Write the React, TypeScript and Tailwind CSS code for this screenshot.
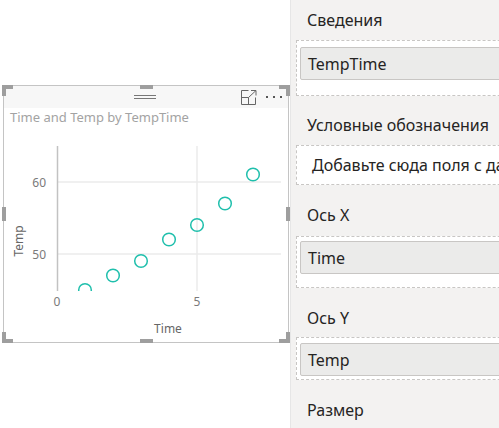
const font = { fontFamily: '"Noto Sans", "Open Sans", sans-serif' };

const points: [number, number][] = [
  [85, 290],
  [113, 275.5],
  [141, 261],
  [169, 239.5],
  [197, 225],
  [225, 203.5],
  [253, 174.5],
];

function ScatterChart() {
  return (
    <svg width={284} height={214} viewBox="4 128 284 214" className="block">
      <defs>
        <clipPath id="plot">
          <rect x={57} y={140} width={230} height={151} />
        </clipPath>
      </defs>
      <line x1={57} y1={182} x2={281} y2={182} stroke="#ebebeb" strokeWidth={1.5} />
      <line x1={57} y1={254} x2={281} y2={254} stroke="#ebebeb" strokeWidth={1.5} />
      <line x1={197} y1={146} x2={197} y2={291} stroke="#ebebeb" strokeWidth={1.5} />
      <line x1={57.5} y1={146} x2={57.5} y2={291} stroke="#c2c2c2" strokeWidth={1.5} />
      <g clipPath="url(#plot)">
        {points.map(([cx, cy]) => (
          <circle key={cx} cx={cx} cy={cy} r={6.3} fill="none" stroke="#1fbfac" strokeWidth={1.5} />
        ))}
      </g>
      <g fontSize={12} fill="#7a7a7a" style={font}>
        <text x={46} y={182} textAnchor="end" dominantBaseline="central">60</text>
        <text x={46} y={254} textAnchor="end" dominantBaseline="central">50</text>
        <text x={57} y={301} textAnchor="middle" dominantBaseline="central">0</text>
        <text x={197} y={301} textAnchor="middle" dominantBaseline="central">5</text>
        <text x={168} y={328} textAnchor="middle" dominantBaseline="central" fill="#666">Time</text>
        <text
          x={18}
          y={241}
          textAnchor="middle"
          dominantBaseline="central"
          fill="#666"
          transform="rotate(-90 18 241)"
        >
          Temp
        </text>
      </g>
    </svg>
  );
}

function Handle({ className }: { className: string }) {
  return <div className={`absolute border-[#9e9e9e] ${className}`} />;
}

function Visual() {
  return (
    <div className="relative ml-[3px] mt-[85px] w-[286px] h-[258px] border border-[#c4c4c4] bg-white">
      {/* selection handles drawn over the frame */}
      <Handle className="-left-[2px] -top-[1px] w-[11px] h-[11px] border-l-4 border-t-4" />
      <Handle className="-right-[2px] -top-[1px] w-[11px] h-[11px] border-r-4 border-t-4" />
      <Handle className="-left-[2px] -bottom-[1px] w-[11px] h-[11px] border-l-4 border-b-4" />
      <Handle className="-right-[2px] -bottom-[1px] w-[11px] h-[11px] border-r-4 border-b-4" />
      <Handle className="left-[136px] -top-[1px] w-[13px] border-t-4" />
      <Handle className="left-[136px] -bottom-[1px] w-[13px] border-b-4" />
      <Handle className="-left-[2px] top-[121px] h-[14px] border-l-4" />
      <Handle className="-right-[2px] top-[121px] h-[14px] border-r-4" />

      <div className="h-[22px] bg-[#f7f7f7] grid grid-cols-[1fr_20px_1fr] items-center">
        <div />
        <div className="flex flex-col gap-[2px] -ml-[2px]">
          <div className="h-px bg-[#777]" />
          <div className="h-px bg-[#777]" />
        </div>
        <div className="flex items-center justify-end gap-[9px] pr-[6px]">
          <svg width={16} height={15} viewBox="0 0 16 15" className="block">
            <path d="M7.5 0.5H0.5V14.5H14.5V7.5" fill="none" stroke="#666" />
            <path d="M0.5 7.5H7.5V14.5" fill="none" stroke="#666" />
            <path d="M7.5 7.5L15 0.5M10 0.5H15V5.5" fill="none" stroke="#666" />
          </svg>
          <div className="flex gap-[5px]">
            <div className="w-[2px] h-[2px] bg-[#555]" />
            <div className="w-[2px] h-[2px] bg-[#555]" />
            <div className="w-[2px] h-[2px] bg-[#555]" />
          </div>
        </div>
      </div>
      <div className="h-[20px] pl-[6px] flex items-center text-[13px] text-[#a3a3a3]" style={font}>
        Time and Temp by TempTime
      </div>
      <ScatterChart />
    </div>
  );
}

function FieldPill({ label }: { label: string }) {
  return (
    <div className="ml-[3px] h-[33px] flex items-center pl-[7px] bg-[#ebebea] border border-[#c8c6c4] rounded-[2px] text-[16px] text-[#252423]">
      {label}
    </div>
  );
}

function Label({ text }: { text: string }) {
  return <div className="pl-[16px] h-[20px] flex items-center text-[16px] whitespace-nowrap">{text}</div>;
}

export default function App() {
  return (
    <div className="w-[499px] h-[428px] flex bg-white overflow-hidden" style={font}>
      <div className="w-[290px] shrink-0">
        <Visual />
      </div>
      <div className="flex-1 bg-[#f3f2f1] border-l border-[#e6e6e6] overflow-hidden pt-[10px] text-[#252423] flex flex-col">
        <Label text="Сведения" />
        <div className="ml-[5px] mt-[10px] w-[240px] h-[56px] pt-[6px] border border-dashed border-[#c8c6c4] bg-white">
          <FieldPill label="TempTime" />
        </div>
        <div className="mt-[19px]">
          <Label text="Условные обозначения" />
        </div>
        <div className="ml-[5px] mt-[10px] w-[240px] h-[40px] pl-[15px] flex items-center border border-dashed border-[#c8c6c4] bg-white text-[16px] whitespace-nowrap">
          Добавьте сюда поля с данными
        </div>
        <div className="mt-[20px]">
          <Label text="Ось X" />
        </div>
        <div className="ml-[5px] mt-[11px] w-[240px] h-[52px] pt-[4px] border border-dashed border-[#c8c6c4] bg-white">
          <FieldPill label="Time" />
        </div>
        <div className="mt-[20px]">
          <Label text="Ось Y" />
        </div>
        <div className="ml-[5px] mt-[9px] w-[240px] h-[43px] pt-[5px] border border-dashed border-[#c8c6c4] bg-white">
          <FieldPill label="Temp" />
        </div>
        <div className="mt-[20px]">
          <Label text="Размер" />
        </div>
      </div>
    </div>
  );
}
